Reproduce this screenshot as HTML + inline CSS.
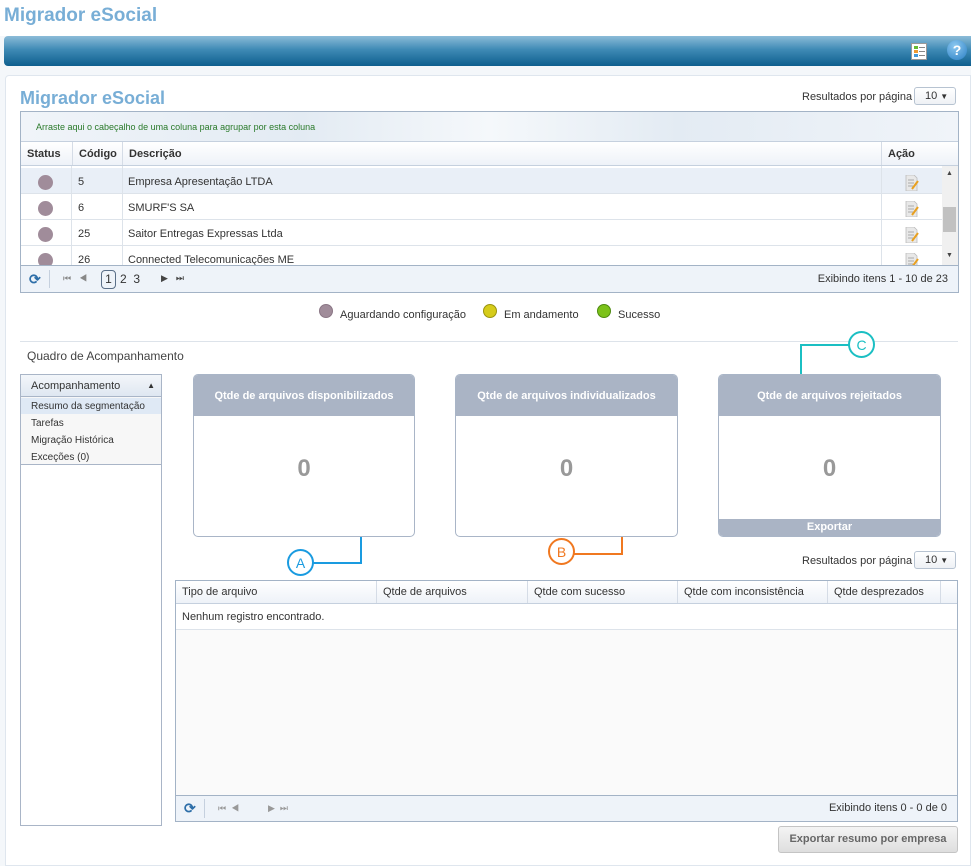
<!DOCTYPE html>
<html><head><meta charset="utf-8"><style>
*{box-sizing:border-box;margin:0;padding:0}
body{width:971px;height:866px;background:#f4f7fa;font-family:"Liberation Sans",Arial,sans-serif;font-size:11px;color:#333;position:relative;overflow:hidden}
.a{position:absolute}
.top{left:0;top:0;width:971px;height:36px;background:#fff}
.bar{left:4px;top:36px;width:967px;height:30px;background:linear-gradient(#8cbcd8,#3f8ab5 45%,#0e5f8e);border-radius:4px 0 0 4px}
.panel{left:5px;top:75px;width:966px;height:791px;background:#fff;border:1px solid #dfe6ee;border-radius:4px 0 0 0}
.h1{font-weight:bold;color:#78aed6}
.grid{border:1px solid #a3b3c6;background:#fff}
.th{background:linear-gradient(#fff,#eef2f8);border-bottom:1px solid #c5d0de}
.cell{position:absolute;top:0;height:100%;border-left:1px solid #d5dce6;padding-left:6px;display:flex;align-items:center}
.row{position:absolute;left:0;width:921px;height:26px;border-bottom:1px solid #dde3ea}
.dot{position:absolute;width:15px;height:15px;border-radius:50%;background:#a08c9a;left:17px;top:7px}
.pager{background:#eef3f9;border-top:1px solid #a3b3c6}
.sel{border:1px solid #b7c3d1;border-radius:3px;background:linear-gradient(#fff,#eef1f5);font-size:11px;padding:2px 0 0 10px;color:#333}
.card{border:1px solid #a9b5c7;border-radius:5px;background:#fff;overflow:hidden}
.ch{height:41px;background:#aab4c5;color:#fff;font-weight:bold;font-size:11px;display:flex;align-items:center;justify-content:center}
.num{position:absolute;left:0;width:100%;top:80px;text-align:center;font-size:24px;font-weight:bold;color:#999}
.circ{width:27px;height:27px;border-radius:50%;border:2px solid;background:#fff;display:flex;align-items:center;justify-content:center;font-size:14px}
.ed{position:absolute;left:22px;top:6px;width:14px;height:16px}
</style></head><body>
<div class="a top"></div>
<div class="a h1" style="left:4px;top:5px;font-size:19px">Migrador eSocial</div>
<div class="a bar"></div>
<div class="a" style="left:911px;top:43px;width:16px;height:17px;background:#fff;border:1px solid #999">
 <div class="a" style="left:2px;top:2px;width:4px;height:3px;background:#6b3"></div><div class="a" style="left:2px;top:6px;width:4px;height:3px;background:#e93"></div><div class="a" style="left:2px;top:10px;width:4px;height:3px;background:#49d"></div>
 <div class="a" style="left:7px;top:3px;width:6px;height:1px;background:#888;box-shadow:0 4px #888,0 8px #888"></div></div>
<div class="a" style="left:947px;top:40px;width:20px;height:20px;border-radius:50%;background:radial-gradient(circle at 40% 30%,#8cc8f0,#2a7fc4);color:#fff;font-weight:bold;font-size:14px;text-align:center;line-height:20px">?</div>
<div class="a panel"></div>
<div class="a h1" style="left:20px;top:88px;font-size:18px">Migrador eSocial</div>
<div class="a" style="left:802px;top:91px">Resultados por página</div>
<div class="a sel" style="left:914px;top:87px;width:42px;height:18px">10 <span style="font-size:8px">▼</span></div>

<div class="a grid" style="left:20px;top:111px;width:939px;height:182px;overflow:hidden">
 <div class="a" style="left:0;top:0;width:937px;height:30px;background:linear-gradient(90deg,#f0f4f9,#e3ebf3 30%,#f5f8fb 50%,#e3ebf3 70%,#f0f4f9);border-bottom:1px solid #c5d0de"></div>
 <div class="a" style="left:15px;top:10px;font-size:9px;color:#2a7a2a">Arraste aqui o cabeçalho de uma coluna para agrupar por esta coluna</div>
 <div class="a th" style="left:0;top:30px;width:937px;height:24px;font-size:11px;font-weight:bold;color:#333">
  <div class="cell" style="left:0;border:none">Status</div><div class="cell" style="left:51px">Código</div><div class="cell" style="left:101px">Descrição</div><div class="cell" style="left:860px">Ação</div>
 </div>
 <div class="a" style="left:0;top:54px;width:921px;height:100px;overflow:hidden">
  <div class="row" style="top:2px;background:#e9eff7"><div class="dot"></div></div>
  <div class="row" style="top:28px"><div class="dot"></div></div>
  <div class="row" style="top:54px"><div class="dot"></div></div>
  <div class="row" style="top:80px"><div class="dot"></div></div>
  <div class="a" style="left:50px;top:0;width:1px;height:100px;background:#dde3ea"></div>
  <div class="a" style="left:101px;top:0;width:1px;height:100px;background:#dde3ea"></div>
  <div class="a" style="left:860px;top:0;width:1px;height:100px;background:#dde3ea"></div>
  <div class="a" style="left:57px;top:10px">5</div><div class="a" style="left:107px;top:10px">Empresa Apresentação LTDA</div>
  <div class="a" style="left:57px;top:36px">6</div><div class="a" style="left:107px;top:36px">SMURF'S SA</div>
  <div class="a" style="left:57px;top:62px">25</div><div class="a" style="left:107px;top:62px">Saitor Entregas Expressas Ltda</div>
  <div class="a" style="left:57px;top:88px">26</div><div class="a" style="left:107px;top:88px">Connected Telecomunicações ME</div>
  <div class="a" style="left:862px;top:0;width:58px;height:100px">
   <svg class="ed" style="top:9px" viewBox="0 0 14 16"><path d="M1 0h8l3 3v13H1z" fill="#e8e8e8" stroke="#bbb" stroke-width=".8"/><path d="M3 5h6M3 8h6M3 11h5" stroke="#aaa"/><path d="M13 6l-6 8" stroke="#e8a020" stroke-width="2"/></svg>
   <svg class="ed" style="top:35px" viewBox="0 0 14 16"><path d="M1 0h8l3 3v13H1z" fill="#e8e8e8" stroke="#bbb" stroke-width=".8"/><path d="M3 5h6M3 8h6M3 11h5" stroke="#aaa"/><path d="M13 6l-6 8" stroke="#e8a020" stroke-width="2"/></svg>
   <svg class="ed" style="top:61px" viewBox="0 0 14 16"><path d="M1 0h8l3 3v13H1z" fill="#e8e8e8" stroke="#bbb" stroke-width=".8"/><path d="M3 5h6M3 8h6M3 11h5" stroke="#aaa"/><path d="M13 6l-6 8" stroke="#e8a020" stroke-width="2"/></svg>
   <svg class="ed" style="top:87px" viewBox="0 0 14 16"><path d="M1 0h8l3 3v13H1z" fill="#e8e8e8" stroke="#bbb" stroke-width=".8"/><path d="M3 5h6M3 8h6M3 11h5" stroke="#aaa"/><path d="M13 6l-6 8" stroke="#e8a020" stroke-width="2"/></svg>
  </div>
 </div>
 <div class="a" style="left:921px;top:54px;width:16px;height:100px;background:#f0f0f0"><div class="a" style="left:4px;top:4px;font-size:7px;color:#444">▲</div><div class="a" style="left:1px;top:41px;width:13px;height:25px;background:#c1c1c1"></div><div class="a" style="left:4px;top:86px;font-size:7px;color:#444">▼</div></div>
 <div class="a pager" style="left:0;top:153px;width:937px;height:27px">
  <div class="a" style="left:8px;top:5px;color:#2d6ea8;font-size:14px;font-weight:bold">⟳</div>
  <div class="a" style="left:28px;top:4px;width:1px;height:18px;background:#c5d0de"></div>
  <div class="a" style="left:42px;top:7px;font-size:9px;color:#888;letter-spacing:8px">⏮◀</div>
  <div class="a" style="left:80px;top:4px;width:15px;height:19px;border:1px solid #5a6f88;border-radius:4px;text-align:center;line-height:17px;font-size:12px">1</div>
  <div class="a" style="left:99px;top:6px;font-size:12px">2&nbsp;&nbsp;3</div>
  <div class="a" style="left:140px;top:7px;font-size:9px;color:#444;letter-spacing:8px">▶⏭</div>
  <div class="a" style="right:10px;top:7px">Exibindo itens 1 - 10 de 23</div>
 </div>
</div>

<div class="a" style="left:319px;top:304px;width:14px;height:14px;border-radius:50%;background:#a08c9a;border:1px solid #8a7685"></div>
<div class="a" style="left:340px;top:309px;font-size:11px">Aguardando configuração</div>
<div class="a" style="left:483px;top:304px;width:14px;height:14px;border-radius:50%;background:#d6cc1a;border:1px solid #9a9410"></div>
<div class="a" style="left:504px;top:309px;font-size:11px">Em andamento</div>
<div class="a" style="left:597px;top:304px;width:14px;height:14px;border-radius:50%;background:#7cc21a;border:1px solid #4e8a10"></div>
<div class="a" style="left:618px;top:309px;font-size:11px">Sucesso</div>
<div class="a" style="left:20px;top:341px;width:938px;height:1px;background:#dde3ea"></div>
<div class="a" style="left:27px;top:349px;font-size:12px;color:#444">Quadro de Acompanhamento</div>

<div class="a" style="left:20px;top:374px;width:142px;height:452px;border:1px solid #a9b5c7;background:#fff">
 <div class="a" style="left:0;top:0;width:140px;height:22px;background:linear-gradient(#f3f6fa,#dfe7f1);border-bottom:1px solid #a9b5c7;padding:5px 0 0 10px;font-size:11px;color:#333">Acompanhamento<span style="position:absolute;right:6px;top:6px;font-size:8px">▲</span></div>
 <div class="a" style="left:0;top:22px;width:140px;height:68px;background:#f7f7f7;border-bottom:1px solid #a9b5c7"></div>
 <div class="a" style="left:0;top:23px;width:140px;height:16px;background:#dfe9f5"></div>
 <div class="a" style="left:10px;top:26px;font-size:10px">Resumo da segmentação</div>
 <div class="a" style="left:10px;top:43px;font-size:10px">Tarefas</div>
 <div class="a" style="left:10px;top:60px;font-size:10px">Migração Histórica</div>
 <div class="a" style="left:10px;top:77px;font-size:10px">Exceções (0)</div>
</div>

<div class="a card" style="left:193px;top:374px;width:222px;height:163px"><div class="ch">Qtde de arquivos disponibilizados</div><div class="num">0</div></div>
<div class="a card" style="left:455px;top:374px;width:223px;height:163px"><div class="ch">Qtde de arquivos individualizados</div><div class="num">0</div></div>
<div class="a card" style="left:718px;top:374px;width:223px;height:163px"><div class="ch">Qtde de arquivos rejeitados</div><div class="num">0</div><div class="a" style="left:0;bottom:0;width:100%;height:17px;background:#aab4c5;color:#fff;font-weight:bold;text-align:center;line-height:17px">Exportar</div></div>

<div class="a" style="left:313px;top:562px;width:49px;height:2px;background:#1a9be0"></div>
<div class="a" style="left:360px;top:537px;width:2px;height:27px;background:#1a9be0"></div>
<div class="a circ" style="left:287px;top:549px;border-color:#1a9be0;color:#1a9be0">A</div>
<div class="a" style="left:574px;top:553px;width:49px;height:2px;background:#f07820"></div>
<div class="a" style="left:621px;top:537px;width:2px;height:18px;background:#f07820"></div>
<div class="a circ" style="left:548px;top:538px;border-color:#f07820;color:#f07820">B</div>
<div class="a" style="left:800px;top:344px;width:50px;height:2px;background:#1bbfc3"></div>
<div class="a" style="left:800px;top:344px;width:2px;height:30px;background:#1bbfc3"></div>
<div class="a circ" style="left:848px;top:331px;border-color:#1bbfc3;color:#1bbfc3">C</div>

<div class="a" style="left:802px;top:555px">Resultados por página</div>
<div class="a sel" style="left:914px;top:551px;width:42px;height:18px">10 <span style="font-size:8px">▼</span></div>

<div class="a grid" style="left:175px;top:580px;width:783px;height:242px;background:#fafafa">
 <div class="a th" style="left:0;top:0;width:781px;height:23px;color:#333;font-size:11px">
  <div class="cell" style="left:0;border:none">Tipo de arquivo</div><div class="cell" style="left:200px">Qtde de arquivos</div><div class="cell" style="left:351px">Qtde com sucesso</div><div class="cell" style="left:501px">Qtde com inconsistência</div><div class="cell" style="left:651px">Qtde desprezados</div><div class="cell" style="left:764px"></div>
 </div>
 <div class="a" style="left:0;top:23px;width:781px;height:26px;background:#fff;border-bottom:1px solid #dde3ea;padding:7px 6px;font-size:11px">Nenhum registro encontrado.</div>
 <div class="a pager" style="left:0;top:214px;width:781px;height:26px">
  <div class="a" style="left:8px;top:4px;color:#2d6ea8;font-size:14px;font-weight:bold">⟳</div>
  <div class="a" style="left:28px;top:3px;width:1px;height:19px;background:#c5d0de"></div>
  <div class="a" style="left:42px;top:7px;font-size:9px;color:#999">⏮&nbsp;&nbsp;◀</div>
  <div class="a" style="left:92px;top:7px;font-size:9px;color:#999">▶&nbsp;&nbsp;⏭</div>
  <div class="a" style="right:10px;top:6px;font-size:11px">Exibindo itens 0 - 0 de 0</div>
 </div>
</div>
<div class="a" style="left:778px;top:826px;width:180px;height:27px;border:1px solid #c4c4c4;border-radius:3px;background:linear-gradient(#f4f4f4,#dedede);text-align:center;line-height:25px;font-weight:bold;font-size:11px;color:#666">Exportar resumo por empresa</div>
</body></html>
